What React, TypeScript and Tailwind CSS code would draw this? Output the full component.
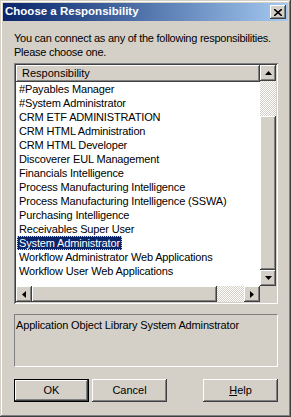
import React from "react";

const raised =
  "shadow-[inset_-1px_-1px_#404040,inset_1px_1px_#ffffff,inset_-2px_-2px_#808080,inset_2px_2px_#d4d0c8]";
const sunken =
  "shadow-[inset_1px_1px_#808080,inset_-1px_-1px_#ffffff,inset_2px_2px_#404040,inset_-2px_-2px_#d4d0c8]";
const checker =
  "bg-[repeating-conic-gradient(#ffffff_0_25%,#d4d0c8_0_50%)] bg-[length:2px_2px]";

const items = [
  "#Payables Manager",
  "#System Administrator",
  "CRM ETF ADMINISTRATION",
  "CRM HTML Administration",
  "CRM HTML Developer",
  "Discoverer EUL Management",
  "Financials Intelligence",
  "Process Manufacturing Intelligence",
  "Process Manufacturing Intelligence (SSWA)",
  "Purchasing Intelligence",
  "Receivables Super User",
  "System Administrator",
  "Workflow Administrator Web Applications",
  "Workflow User Web Applications",
];

function Arrow({ dir }: { dir: "up" | "down" | "left" | "right" }) {
  const points = {
    up: "3.5,0 7,4 0,4",
    down: "0,0 7,0 3.5,4",
    left: "4,0 4,7 0,3.5",
    right: "0,0 4,3.5 0,7",
  }[dir];
  const vertical = dir === "up" || dir === "down";
  return (
    <svg width={vertical ? 7 : 4} height={vertical ? 4 : 7} className="block">
      <polygon points={points} fill="#000" />
    </svg>
  );
}

function ScrollButton({ dir }: { dir: "up" | "down" | "left" | "right" }) {
  return (
    <div className={`w-[16px] h-[16px] shrink-0 bg-[#d4d0c8] flex items-center justify-center ${raised}`}>
      <Arrow dir={dir} />
    </div>
  );
}

function Button({ label, isDefault }: { label: React.ReactNode; isDefault?: boolean }) {
  return (
    <div
      className={`w-[75px] h-[23px] flex items-center justify-center bg-[#d4d0c8] text-[11px] text-black ${
        isDefault ? "border border-black" : ""
      }`}
    >
      <div className={`w-full h-full flex items-center justify-center ${raised}`}>{label}</div>
    </div>
  );
}

export default function App() {
  return (
    <div
      className="w-[291px] h-[417px] bg-[#d4d0c8] p-[3px] flex flex-col shadow-[inset_-1px_-1px_#404040,inset_1px_1px_#d4d0c8,inset_-2px_-2px_#808080,inset_2px_2px_#ffffff]"
      style={{ fontFamily: '"Liberation Sans", Arial, sans-serif' }}
    >
      {/* title bar */}
      <div className="h-[18px] flex items-center pl-[2px] pr-[2px] bg-gradient-to-r from-[#0a246a] to-[#a6caf0]">
        <span className="text-white font-bold text-[11.5px] leading-none flex-1">Choose a Responsibility</span>
        <div className={`w-[16px] h-[14px] bg-[#d4d0c8] flex items-center justify-center ${raised}`}>
          <svg width="8" height="7" className="block">
            <path d="M0 0 L8 7 M8 0 L0 7" stroke="#000" strokeWidth="1.6" />
          </svg>
        </div>
      </div>

      <div className="px-[11px] flex flex-col">
        <p className="mt-[10px] text-[11px] leading-[14px] text-black whitespace-nowrap tracking-[-0.25px]">
          You can connect as any of the following responsibilities.
          <br />
          Please choose one.
        </p>

        {/* list box */}
        <div className={`mt-[4px] w-[264px] h-[241px] bg-white p-[2px] flex flex-col ${sunken}`}>
          <div className="flex flex-1 min-h-0">
            <div className="flex-1 flex flex-col min-w-0 overflow-hidden">
              <div className={`h-[17px] shrink-0 bg-[#d4d0c8] pl-[6px] flex items-center text-[11px] text-black ${raised}`}>
                Responsibility
              </div>
              <div className="flex flex-col">
                {items.map((item, i) => (
                  <div key={item} className="h-[14px] flex items-center pl-[1px] whitespace-nowrap tracking-[-0.15px]">
                    {i === 11 ? (
                      <span className="bg-[#0a246a] text-white text-[11px] leading-[14px] px-[2px] outline outline-1 outline-dotted outline-[#d4d0c8] -outline-offset-1">
                        {item}
                      </span>
                    ) : (
                      <span className="text-black text-[11px] leading-[14px] px-[2px]">{item}</span>
                    )}
                  </div>
                ))}
              </div>
            </div>
            {/* vertical scrollbar */}
            <div className="w-[16px] flex flex-col">
              <ScrollButton dir="up" />
              <div className={`h-[35px] ${checker}`} />
              <div className={`h-[154px] bg-[#d4d0c8] ${raised}`} />
              <ScrollButton dir="down" />
            </div>
          </div>
          {/* horizontal scrollbar */}
          <div className="h-[16px] flex shrink-0">
            <ScrollButton dir="left" />
            <div className={`w-[185px] bg-[#d4d0c8] ${raised}`} />
            <div className={`w-[27px] ${checker}`} />
            <ScrollButton dir="right" />
            <div className="w-[16px] bg-[#d4d0c8]" />
          </div>
        </div>

        {/* description */}
        <div className="mt-[10px] w-[264px] h-[53px] border-t border-l border-[#808080] border-b-white border-r-white border-b border-r px-[1px] pt-[3px] text-[11px] leading-[14px] text-black tracking-[-0.15px]">
          Application Object Library System Adminstrator
        </div>

        {/* buttons */}
        <div className="mt-[12px] flex w-[264px]">
          <Button label="OK" isDefault />
          <div className="w-[3px]" />
          <Button label="Cancel" />
          <div className="flex-1" />
          <Button
            label={
              <span>
                <span className="underline">H</span>elp
              </span>
            }
          />
        </div>
      </div>
    </div>
  );
}
